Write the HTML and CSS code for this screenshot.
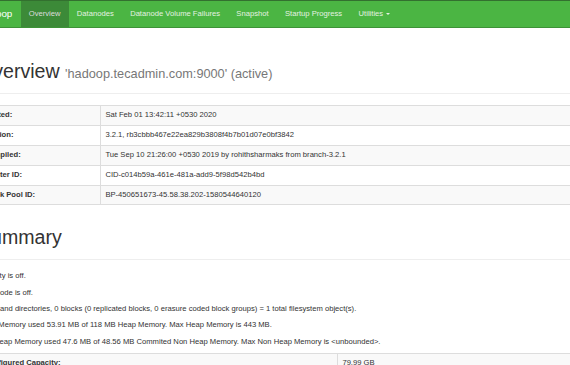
FILE: index.html
```html
<!DOCTYPE html>
<html lang="en">
<head>
  <meta charset="UTF-8">
  <title>Namenode information</title>
  <link rel="stylesheet" href="styles.css">
</head>
<body>
  <header class="navbar">
    <div class="navbar-inner">
      <a class="navbar-brand" href="#">Hadoop</a>
      <ul class="nav">
        <li class="active"><a href="#">Overview</a></li>
        <li><a href="#">Datanodes</a></li>
        <li><a href="#">Datanode Volume Failures</a></li>
        <li><a href="#">Snapshot</a></li>
        <li><a href="#">Startup Progress</a></li>
        <li><a href="#">Utilities <span class="caret"></span></a></li>
      </ul>
    </div>
  </header>

  <div class="container">
    <div class="page-header">
      <h1>Overview <small>'hadoop.tecadmin.com:9000' (active)</small></h1>
    </div>

    <table class="table table-overview">
      <tr><th>Started:</th><td>Sat Feb 01 13:42:11 +0530 2020</td></tr>
      <tr><th>Version:</th><td>3.2.1, rb3cbbb467e22ea829b3808f4b7b01d07e0bf3842</td></tr>
      <tr><th>Compiled:</th><td>Tue Sep 10 21:26:00 +0530 2019 by rohithsharmaks from branch-3.2.1</td></tr>
      <tr><th>Cluster ID:</th><td>CID-c014b59a-461e-481a-add9-5f98d542b4bd</td></tr>
      <tr><th>Block Pool ID:</th><td>BP-450651673-45.58.38.202-1580544640120</td></tr>
    </table>

    <div class="page-header">
      <h1>Summary</h1>
    </div>

    <p>Security is off.</p>
    <p>Safemode is off.</p>
    <p>1 files and directories, 0 blocks (0 replicated blocks, 0 erasure coded block groups) = 1 total filesystem object(s).</p>
    <p>Heap Memory used 53.91 MB of 118 MB Heap Memory. Max Heap Memory is 443 MB.</p>
    <p>Non Heap Memory used 47.6 MB of 48.56 MB Commited Non Heap Memory. Max Non Heap Memory is &lt;unbounded&gt;.</p>

    <table class="table table-summary">
      <tr><th>Configured Capacity:</th><td>79.99 GB</td></tr>
      <tr><th>Configured Remote Capacity:</th><td>0 B</td></tr>
      <tr><th>DFS Used:</th><td>4 KB (0%)</td></tr>
    </table>
  </div>
</body>
</html>
```

FILE: styles.css
```css
* {
  box-sizing: border-box;
}

html, body {
  margin: 0;
  overflow: hidden;
}

body {
  font-family: "Liberation Sans", Arial, sans-serif;
  font-size: 7.63px;
  line-height: 10.9px;
  color: #333;
  background: #fff;
}

/* top navigation */
.navbar {
  height: 28px;
  margin-bottom: 11px;
  background: #4bb543;
  border-top: 1px solid #33702f;
  border-bottom: 1px solid #3d9237;
}

.navbar-inner {
  display: flex;
  height: 100%;
  margin-left: -22px;
}

.navbar-brand {
  display: flex;
  align-items: center;
  padding-right: 8.2px;
  font-size: 9.8px;
  color: #fff;
  text-decoration: none;
}

.nav {
  display: flex;
  margin: 0;
  padding: 0;
  list-style: none;
}

.nav li {
  display: flex;
}

.nav a {
  display: flex;
  align-items: center;
  padding: 0 8.2px;
  color: #e3f1e1;
  text-decoration: none;
  white-space: nowrap;
}

.nav .active a {
  background: #3c8a38;
  color: #dcdcdc;
}

.caret {
  display: inline-block;
  width: 0;
  height: 0;
  margin-left: 3px;
  border-top: 2.2px solid #e3f1e1;
  border-left: 2.2px solid transparent;
  border-right: 2.2px solid transparent;
}

/* page body */
.container {
  display: flow-root;
  width: 640px;
  margin-left: -22px;
}

.page-header {
  margin: 22px 0 11px;
  padding-bottom: 4.9px;
  border-bottom: 1px solid #eee;
}

.page-header h1 {
  margin: 0 0 5.45px;
  font-size: 19.6px;
  font-weight: 500;
  line-height: 1.1;
  white-space: nowrap;
}

.page-header h1 small {
  font-size: 65%;
  font-weight: normal;
  color: #777;
}

p {
  margin: 0 0 5.45px;
  white-space: nowrap;
}

.table {
  width: 100%;
  margin-bottom: 11px;
  border-collapse: collapse;
}

.table th,
.table td {
  padding: 4px 4.4px;
  line-height: 10.9px;
  border: 1px solid #ddd;
  text-align: left;
  vertical-align: top;
  white-space: nowrap;
}

.table th {
  font-weight: bold;
}

.table tr:nth-child(odd) {
  background: #f9f9f9;
}

.table-overview th {
  width: 122px;
}

.table-summary th {
  width: 359px;
}
```
